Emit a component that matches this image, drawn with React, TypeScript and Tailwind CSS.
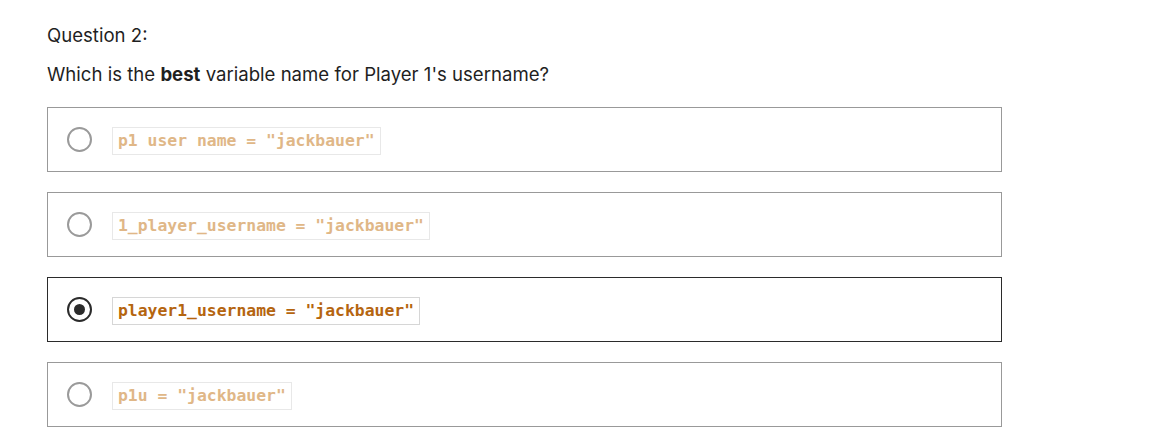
const options = [
  { code: 'p1 user name = "jackbauer"' },
  { code: '1_player_username = "jackbauer"' },
  { code: 'player1_username = "jackbauer"', selected: true },
  { code: 'p1u = "jackbauer"' },
];

export default function App() {
  return (
    <div className="min-h-[445px] bg-white pl-[47px] pt-[23px] font-['Inter',sans-serif] text-[#1f1f1f]">
      <p className="text-[18.6px] leading-[24px]">Question 2:</p>
      <p className="mt-[15px] text-[18.6px] leading-[24px]">
        Which is the <strong className="font-bold">best</strong> variable name for Player 1's username?
      </p>
      <div className="mt-[21px] flex w-[955px] flex-col gap-[20px]">
        {options.map((o) => (
          <Option key={o.code} code={o.code} selected={!!o.selected} />
        ))}
      </div>
    </div>
  );
}

function Option({ code, selected }: { code: string; selected: boolean }) {
  return (
    <div
      className={
        "flex h-[65px] items-center gap-[20px] border pl-[19px] " +
        (selected ? "border-[#2b2b2b]" : "border-[#999999]")
      }
    >
      <span
        className={
          "flex h-[25px] w-[25px] items-center justify-center rounded-full border-2 " +
          (selected ? "border-[#2b2b2b]" : "border-[#9a9a9a]")
        }
      >
        {selected && <span className="h-[11px] w-[11px] rounded-full bg-[#2b2b2b]" />}
      </span>
      <code
        className={
          "mt-[2px] border px-[5px] font-['DejaVu_Sans_Mono',monospace] text-[16.4px] font-semibold leading-[26px] " +
          (selected ? "border-[#d6d6d6] text-[#b5650f]" : "border-[#e8e8e8] text-[#e0b787]")
        }
      >
        {code}
      </code>
    </div>
  );
}
